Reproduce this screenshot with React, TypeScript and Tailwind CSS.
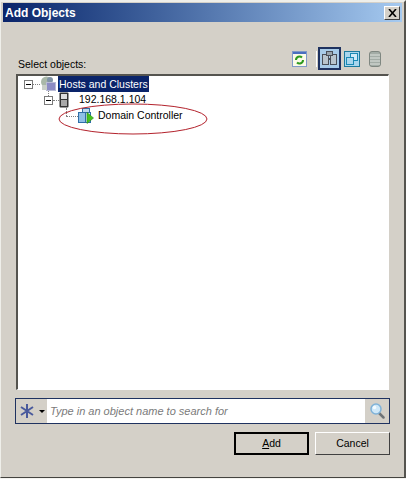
function Expander() {
  return (
    <span className="relative z-10 flex h-[9px] w-[9px] shrink-0 items-center justify-center border border-[#7a7a7a] bg-white">
      <span className="h-px w-[5px] bg-black" />
    </span>
  );
}

function HostsIcon() {
  return (
    <svg width="16" height="16" viewBox="0 0 16 16" className="shrink-0">
      <circle cx="6.5" cy="6" r="5.5" fill="#a9b8a8" />
      <circle cx="10" cy="4" r="3" fill="#7f93a5" />
      <rect x="6.5" y="6.5" width="9" height="8" fill="#8c8cc4" stroke="#b9bbd6" />
      <rect x="2" y="9" width="5" height="5" fill="#c9cfc9" />
    </svg>
  );
}

function ServerIcon() {
  return (
    <svg width="10" height="16" viewBox="0 0 10 16" className="shrink-0">
      <rect x="0.5" y="0.5" width="9" height="15" rx="1" fill="#333" />
      <rect x="2" y="2" width="6" height="5" fill="#dcdcdc" />
      <rect x="2" y="8" width="6" height="6" fill="#a8a8a8" />
    </svg>
  );
}

function VmIcon() {
  return (
    <svg width="16" height="16" viewBox="0 0 16 16" className="shrink-0">
      <rect x="4.5" y="0.5" width="7" height="6" fill="#bcd8f0" stroke="#2f6fa8" />
      <rect x="0.5" y="4.5" width="7" height="10" fill="#8fc0e8" stroke="#2f6fa8" />
      <rect x="7.5" y="4.5" width="5" height="10" fill="#cfe4f6" stroke="#2f6fa8" />
      <path d="M9 4.5 L15.5 10 L9 15.5 Z" fill="#45c21f" stroke="#2b8a12" strokeWidth="0.6" />
    </svg>
  );
}

function RefreshIcon() {
  return (
    <svg width="15" height="16" viewBox="0 0 15 16">
      <rect x="0.5" y="0.5" width="14" height="15" fill="#fbfbe8" stroke="#7f9ac8" />
      <rect x="1" y="1" width="13" height="2" fill="#4a6fc0" />
      <path d="M4 9 a3.5 3.5 0 0 1 6-2.5 M11 9 a3.5 3.5 0 0 1 -6 2.5" fill="none" stroke="#2d9a1e" strokeWidth="2" />
    </svg>
  );
}

function HostsClustersButton() {
  return (
    <span className="flex h-[23px] w-[23px] items-center justify-center border-2 border-[#1f3260] bg-[#a8cbe8]">
      <svg width="15" height="15" viewBox="0 0 15 15">
        <rect x="0.5" y="3.5" width="6" height="10" fill="#b9c4cc" stroke="#4a4f58" />
        <rect x="8.5" y="3.5" width="6" height="10" fill="#b9c4cc" stroke="#4a4f58" />
        <rect x="4.5" y="0.5" width="6" height="4" fill="#9aa5ad" stroke="#4a4f58" />
        <rect x="6" y="7" width="3" height="2" fill="#4a4f58" />
      </svg>
    </span>
  );
}

function VmsButton() {
  return (
    <span className="flex h-[16px] w-[16px] items-center justify-center border border-[#1b7a9e] bg-[#a9d6ee]">
      <svg width="12" height="12" viewBox="0 0 12 12">
        <rect x="4.5" y="0.5" width="7" height="7" fill="#cfeaf8" stroke="#1b8ab5" />
        <rect x="0.5" y="4.5" width="7" height="7" fill="#a9d6ee" stroke="#1b8ab5" />
      </svg>
    </span>
  );
}

function DatastoreIcon() {
  return (
    <svg width="12" height="16" viewBox="0 0 12 16">
      <rect x="0.5" y="0.5" width="11" height="15" rx="2.5" fill="#a3aca6" stroke="#7f8781" />
      <path d="M1 4 H11 M1 7 H11 M1 10 H11 M1 13 H11" stroke="#dfe3df" />
    </svg>
  );
}

function AsteriskIcon() {
  return (
    <svg width="14" height="14" viewBox="0 0 14 14">
      <path d="M7 0 V14 M1 3 L13 11 M13 3 L1 11" stroke="#4a5a9c" strokeWidth="2" />
    </svg>
  );
}

function MagnifierIcon() {
  return (
    <svg width="15" height="16" viewBox="0 0 15 16">
      <path d="M9 10 L13.5 14.5" stroke="#6f7478" strokeWidth="2.5" strokeLinecap="round" />
      <circle cx="6" cy="6" r="5" fill="#cfe8f8" stroke="#7fb2d8" strokeWidth="1.5" />
      <circle cx="4.5" cy="4.5" r="1.8" fill="#f4fbff" />
    </svg>
  );
}

export default function App() {
  return (
    <div className="h-[479px] w-[406px] overflow-hidden bg-[#f4f3ef] font-['Liberation_Sans',Arial,sans-serif] text-black">
      <div className="flex h-[478px] flex-col border-t-2 border-r-2 border-b border-l border-t-[#efefea] border-r-[#55544f] border-b-[#44433f] border-l-[#efefea] bg-[#d4d0c8] px-[2px] pt-[1px]">
        <div className="flex h-[19px] shrink-0 items-center justify-between bg-gradient-to-r from-[#0a246a] to-[#a6caf0] pr-[2px] pl-[2px]">
          <span className="text-[12px] font-bold text-white">Add Objects</span>
          <span className="flex h-[14px] w-[16px] items-center justify-center border border-t-white border-r-[#404040] border-b-[#404040] border-l-white bg-[#d4d0c8]">
            <svg width="9" height="8" viewBox="0 0 9 8">
              <path d="M1 0 L8 8 M8 0 L1 8" stroke="black" strokeWidth="1.6" />
            </svg>
          </span>
        </div>

        <div className="flex flex-1 flex-col px-[12px]">
          <div className="mt-[25px] flex h-[27px] shrink-0 items-start justify-between">
            <span className="mt-[10px] pl-[3px] text-[10.5px] leading-[14px]">Select objects:</span>
            <div className="mr-[9px] flex items-center">
              <RefreshIcon />
              <span className="mr-[1px] ml-[9px] h-[16px] w-px bg-white" />
              <HostsClustersButton />
              <span className="ml-[3px]"><VmsButton /></span>
              <span className="ml-[9px]"><DatastoreIcon /></span>
            </div>
          </div>

          <div className="relative mx-[1px] h-[316px] shrink-0 border-t-2 border-r border-b border-l-2 border-t-[#55544f] border-r-white border-b-white border-l-[#55544f] bg-white text-[10.5px]">
            <div className="flex h-[16px] items-center pl-[6px]">
              <Expander />
              <span className="w-[7px] border-t border-dotted border-[#808080]" />
              <HostsIcon />
              <span className="ml-[2px] bg-[#0a246a] px-[1px] leading-[16px] text-white">Hosts and Clusters</span>
            </div>
            <div className="flex h-[16px] items-center pl-[26px]">
              <Expander />
              <span className="w-[6px] border-t border-dotted border-[#808080]" />
              <ServerIcon />
              <span className="ml-[10px]">192.168.1.104</span>
            </div>
            <div className="flex h-[16px] items-center pl-[48px]">
              <span className="w-[12px] border-t border-dotted border-[#808080]" />
              <VmIcon />
              <span className="ml-[4px]">Domain Controller</span>
            </div>
            <span className="absolute top-[15px] left-[30px] h-[5px] border-l border-dotted border-[#808080]" />
            <span className="absolute top-[32px] left-[48px] h-[8px] border-l border-dotted border-[#808080]" />
            <svg width="150" height="32" viewBox="0 0 150 32" className="absolute top-[27px] left-[40px]">
              <ellipse cx="75" cy="16" rx="74" ry="15" fill="none" stroke="#b3222c" />
            </svg>
          </div>

          <div className="mt-[8px] flex h-[26px] shrink-0 items-stretch border border-[#1f3260] bg-[#d4d0c8]">
            <span className="flex w-[31px] items-center gap-[5px] pl-[4px]">
              <AsteriskIcon />
              <span className="h-0 w-0 border-x-[3px] border-t-[3px] border-x-transparent border-t-black" />
            </span>
            <span className="flex-1 bg-white pt-[5px] pl-[3px] text-[11px] leading-[14px] text-[#7b7b7b] italic">
              Type in an object name to search for
            </span>
            <span className="flex w-[24px] items-center justify-center">
              <MagnifierIcon />
            </span>
          </div>

          <div className="mt-[8px] flex justify-end gap-[6px]">
            <button className="flex h-[23px] w-[75px] items-center justify-center border-2 border-black bg-[#d4d0c8] text-[10.5px]">
              <span><span className="underline">A</span>dd</span>
            </button>
            <button className="flex h-[23px] w-[75px] items-center justify-center border border-t-white border-r-[#404040] border-b-[#404040] border-l-white bg-[#d4d0c8] text-[10.5px]">
              Cancel
            </button>
          </div>
        </div>
      </div>
    </div>
  );
}
